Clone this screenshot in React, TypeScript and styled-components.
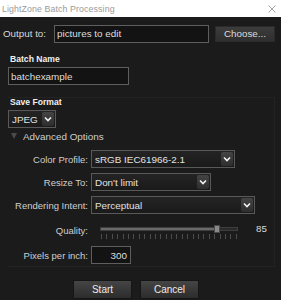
import React from 'react';
import styled, { createGlobalStyle } from 'styled-components';

const GlobalStyle = createGlobalStyle`
  html, body {
    margin: 0;
    padding: 0;
    background: #1b1b1b;
  }
  body {
    font-family: 'Liberation Sans', Arial, sans-serif;
  }
`;

const Window = styled.main`
  width: 281px;
  height: 300px;
  display: flex;
  flex-direction: column;
  background: #1b1b1b;
  color: #d8d8d8;
  overflow: hidden;
`;

const TitleBar = styled.header`
  height: 17px;
  flex: none;
  background: #ffffff;
  display: flex;
  align-items: center;
  justify-content: space-between;
  padding: 0 5px 0 2px;
  font-size: 8.8px;
  color: #9a9a9a;
  letter-spacing: 0.1px;
`;

const CloseGlyph = styled.svg`
  width: 8px;
  height: 8px;
`;

const Content = styled.section`
  flex: none;
  display: flex;
  flex-direction: column;
  padding: 7px 6px 0 3px;
`;

const OutputRow = styled.div`
  display: flex;
  align-items: center;
  height: 19px;
  font-size: 9.8px;
`;

const OutputLabel = styled.label`
  width: 51px;
  flex: none;
`;

const TextInput = styled.div<{ $width: number; $align?: string }>`
  width: ${(p) => p.$width}px;
  height: 18px;
  box-sizing: border-box;
  flex: none;
  display: flex;
  align-items: center;
  justify-content: ${(p) => (p.$align === 'right' ? 'flex-end' : 'flex-start')};
  padding: 0 3px 0 2px;
  background: #131313;
  border: 1px solid #5e5e5e;
  font-size: 9.9px;
  color: #dedede;
`;

const ChooseButton = styled.button`
  margin-left: 6px;
  width: 60px;
  height: 16px;
  border: 1px solid #2a2a2a;
  background: linear-gradient(#3c3c3c, #2f2f2f);
  color: #dcdcdc;
  font-family: 'Liberation Sans', Arial, sans-serif;
  font-size: 9.8px;
  padding: 0;
`;

const Block = styled.div`
  display: flex;
  flex-direction: column;
  gap: 3px;
  padding-left: 5px;
  margin-top: 12px;
`;

const BoldLabel = styled.div`
  font-weight: bold;
  font-size: 8.6px;
  color: #f0f0f0;
  padding-left: 2px;
  height: 9px;
  line-height: 9px;
`;

const Panel = styled.section`
  margin: 12px 0 0 5px;
  border-top: 1px solid #232323;
  border-right: 1px solid #232323;
  border-bottom: 1px solid #232323;
  padding: 0 0 2px 0;
  display: flex;
  flex-direction: column;
`;

const FormatRow = styled.div`
  margin-top: 3px;
`;

const Select = styled.div<{ $width: number }>`
  width: ${(p) => p.$width}px;
  height: 18px;
  box-sizing: border-box;
  display: flex;
  align-items: center;
  justify-content: space-between;
  padding: 1px 1px 1px 3px;
  border: 1px solid #595959;
  background: linear-gradient(#242424, #1a1a1a);
  font-size: 9.9px;
  color: #e2e2e2;
`;

const ArrowBox = styled.span`
  width: 12px;
  height: 14px;
  display: flex;
  align-items: center;
  justify-content: center;
  background: linear-gradient(#444, #2e2e2e);
  border-radius: 2px;
`;

const Chevron = () => (
  <ArrowBox>
    <svg width="8" height="6" viewBox="0 0 8 6">
      <path d="M1 1.5 L4 4.5 L7 1.5" fill="none" stroke="#f2f2f2" strokeWidth="1.6" />
    </svg>
  </ArrowBox>
);

const Disclosure = styled.div`
  display: flex;
  align-items: center;
  gap: 6px;
  margin: 2px 0 0 3px;
  font-size: 9.9px;
  color: #cfcfcf;
  height: 12px;
`;

const Triangle = styled.span`
  width: 0;
  height: 0;
  border-left: 3.5px solid transparent;
  border-right: 3.5px solid transparent;
  border-top: 6px solid #4a4a4a;
`;

const OptionsGrid = styled.div`
  display: grid;
  grid-template-columns: 80px 1fr;
  column-gap: 3px;
  row-gap: 5px;
  margin-top: 8px;
  align-items: center;
`;

const FieldLabel = styled.label`
  text-align: right;
  font-size: 9.5px;
  color: #cfcfcf;
  white-space: nowrap;
`;

const SliderRow = styled.div`
  display: flex;
  align-items: flex-start;
  height: 22px;
  padding-left: 9px;
`;

const Slider = styled.div`
  width: 138px;
  display: flex;
  flex-direction: column;
  gap: 3px;
  padding-top: 8px;
`;

const Track = styled.div`
  position: relative;
  height: 4px;
  background: #2a2a2a;
  border: 1px solid #3e3e3e;
  box-sizing: border-box;
`;

const TrackFill = styled.div`
  height: 100%;
  background: #6a6a6a;
`;

const Thumb = styled.div`
  position: absolute;
  top: -3px;
  width: 6px;
  height: 8px;
  background: #8a8a8a;
  border: 1px solid #4a4a4a;
  box-sizing: border-box;
`;

const Ticks = styled.div`
  display: flex;
  justify-content: space-between;
  padding: 0 1px;
`;

const Tick = styled.span`
  width: 1px;
  height: 5px;
  background: #4c4c4c;
`;

const SliderValue = styled.span`
  margin: 4px 0 0 18px;
  font-size: 9.8px;
  color: #dcdcdc;
`;

const Footer = styled.footer`
  display: flex;
  justify-content: center;
  gap: 8px;
  margin-top: 13px;
  padding-right: 6px;
`;

const ActionButton = styled.button`
  width: 59px;
  height: 19px;
  padding: 0;
  border: 1px solid #151515;
  background: linear-gradient(#454545, #2c2c2c);
  color: #ececec;
  font-family: 'Liberation Sans', Arial, sans-serif;
  font-size: 10px;
`;

function App(): JSX.Element {
  const quality = 85;
  const ticks = Array.from({ length: 26 });

  return (
    <Window>
      <GlobalStyle />
      <TitleBar>
        <span>LightZone Batch Processing</span>
        <CloseGlyph viewBox="0 0 8 8">
          <path d="M0.5 0.5 L7.5 7.5 M7.5 0.5 L0.5 7.5" stroke="#9a9a9a" strokeWidth="0.9" />
        </CloseGlyph>
      </TitleBar>
      <Content>
        <OutputRow>
          <OutputLabel>Output to:</OutputLabel>
          <TextInput $width={155}>pictures to edit</TextInput>
          <ChooseButton>Choose...</ChooseButton>
        </OutputRow>

        <Block>
          <BoldLabel>Batch Name</BoldLabel>
          <TextInput $width={121}>batchexample</TextInput>
        </Block>

        <Panel>
          <BoldLabel>Save Format</BoldLabel>
          <FormatRow>
            <Select $width={48}>
              JPEG
              <Chevron />
            </Select>
          </FormatRow>
          <Disclosure>
            <Triangle />
            Advanced Options
          </Disclosure>
          <OptionsGrid>
            <FieldLabel>Color Profile:</FieldLabel>
            <Select $width={144}>
              sRGB IEC61966-2.1
              <Chevron />
            </Select>
            <FieldLabel>Resize To:</FieldLabel>
            <Select $width={120}>
              Don't limit
              <Chevron />
            </Select>
            <FieldLabel>Rendering Intent:</FieldLabel>
            <Select $width={164}>
              Perceptual
              <Chevron />
            </Select>
            <FieldLabel>Quality:</FieldLabel>
            <SliderRow>
              <Slider>
                <Track>
                  <TrackFill style={{ width: `${quality}%` }} />
                  <Thumb style={{ left: `calc(${quality}% - 3px)` }} />
                </Track>
                <Ticks>
                  {ticks.map((_, i) => (
                    <Tick key={i} />
                  ))}
                </Ticks>
              </Slider>
              <SliderValue>{quality}</SliderValue>
            </SliderRow>
            <FieldLabel>Pixels per inch:</FieldLabel>
            <TextInput $width={40} $align="right">
              300
            </TextInput>
          </OptionsGrid>
        </Panel>

        <Footer>
          <ActionButton>Start</ActionButton>
          <ActionButton>Cancel</ActionButton>
        </Footer>
      </Content>
    </Window>
  );
}

export default App;
